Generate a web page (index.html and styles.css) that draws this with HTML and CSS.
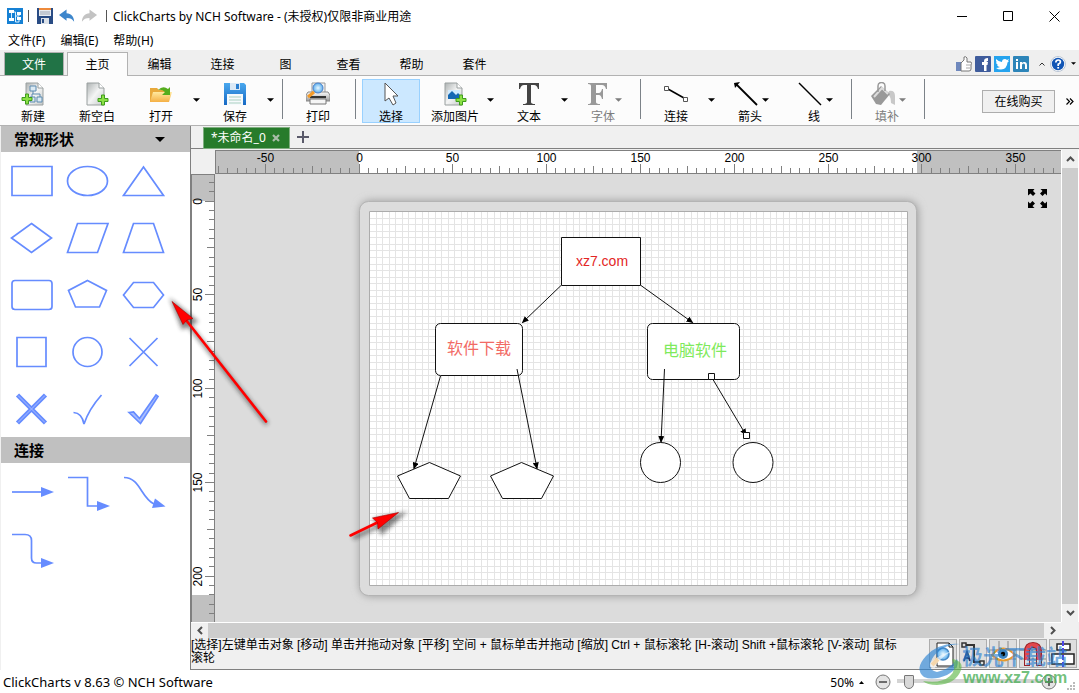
FILE: index.html
```html
<!DOCTYPE html>
<html lang="zh-CN">
<head>
<meta charset="utf-8">
<title>ClickCharts by NCH Software</title>
<link rel="stylesheet" href="styles.css">
</head>
<body>
<svg class="defs" aria-hidden="true">
  <defs>
    <linearGradient id="page" x1="0" y1="0" x2="1" y2="1"><stop offset="0" stop-color="#aeb3b3"/><stop offset=".5" stop-color="#f4f5f5"/><stop offset="1" stop-color="#c4c8c8"/></linearGradient>
    <linearGradient id="blue" x1="0" y1="0" x2="0" y2="1"><stop offset="0" stop-color="#4aa8ee"/><stop offset="1" stop-color="#1769c4"/></linearGradient>
    <linearGradient id="folder" x1="0" y1="0" x2="0" y2="1"><stop offset="0" stop-color="#ffe9a0"/><stop offset="1" stop-color="#f5b044"/></linearGradient>
    <linearGradient id="metal" x1="0" y1="0" x2="0" y2="1"><stop offset="0" stop-color="#fdfdfd"/><stop offset="1" stop-color="#9c9c9c"/></linearGradient>
    <radialGradient id="lens"><stop offset="0" stop-color="#e8f8ff"/><stop offset="1" stop-color="#5aaeee"/></radialGradient>
    <symbol id="plus" viewBox="0 0 12 12"><path d="M4.500 1h3v3.500H11v3H7.500V11h-3V7.500H1v-3h3.500z" fill="#8be045" stroke="#3e9c1c"/></symbol>
    <symbol id="floppy" viewBox="0 0 24 24"><path d="M1 1h20l2 2v20H1z" fill="url(#blue)"/><path d="M7 1h10v7H7z" fill="#dbe9f6"/><path d="M13 2h3v5h-3z" fill="#2b7fd0"/><path d="M4 12h16v11H4z" fill="#f6fafc"/><path d="M6 15h12M6 18h12M6 21h12" stroke="#a9cfc0" stroke-width="1"/></symbol>
    <symbol id="caret" viewBox="0 0 8 4"><path d="M0 0h8L4 4z" fill="currentColor"/></symbol>
    <marker id="tip" markerWidth="7" markerHeight="6" refX="6" refY="3" orient="auto"><path d="M0 0l7 3-7 3z"/></marker>
    <filter id="soft" x="-30%" y="-30%" width="160%" height="160%"><feGaussianBlur stdDeviation="2"/></filter>
    <filter id="page-shadow" x="-10%" y="-10%" width="120%" height="120%"><feGaussianBlur stdDeviation="4"/></filter>
  </defs>
</svg>

<header class="titlebar">
  <svg width="16" height="16" viewBox="0 0 16 16" class="app-icon"><path d="M0 0h16v16H0z" fill="#1681d4"/><path d="M2 2h5v3H2zM2 10h5v3H2zM10 4h4v3h-4zM10 9h4v3h-4z" fill="#fff"/><path d="M4.500 5v5M7 4h1.500v10H12v-2M8 8h4V7" fill="none" stroke="#d9efff"/></svg>
  <span class="divider"></span>
  <button class="quick" aria-label="保存"><svg width="18" height="18" viewBox="0 0 18 18"><path d="M1 1h16v16H1z" fill="#294c84"/><path d="M3 1h12v8H3z" fill="#e9edf2"/><path d="M3 1h12v2H3z" fill="#ee8a3b"/><path d="M4 5h10M4 7h10" stroke="#9ca6b3"/><path d="M5 11h8v6H5z" fill="#dce2e9"/><path d="M6 12h2v4H6z" fill="#294c84"/></svg></button>
  <button class="quick" aria-label="撤销"><svg width="17" height="16" viewBox="0 0 18 16"><path d="M0 7l8-6v4c5 0 8 4 8 9-2-3-4-4-8-4v3z" fill="#3d86cc"/></svg></button>
  <button class="quick" aria-label="重做"><svg width="17" height="16" viewBox="0 0 18 16"><path d="M17 7L9 1v4c-5 0-8 4-8 9 2-3 4-4 8-4v3z" fill="#c3c3c3"/></svg></button>
  <span class="divider last"></span>
  <h1 class="title">ClickCharts by NCH Software - (未授权)仅限非商业用途</h1>
  <div class="window-buttons">
    <button aria-label="最小化"><svg width="11" height="11"><path d="M0 5.500h10" stroke="#000"/></svg></button>
    <button aria-label="最大化"><svg width="11" height="11"><path d="M.5.500h9v9h-9z" fill="none" stroke="#000"/></svg></button>
    <button aria-label="关闭"><svg width="11" height="11"><path d="M.5.500l10 10m0-10l-10 10" stroke="#000"/></svg></button>
  </div>
</header>

<nav class="menubar">
  <button>文件(F)</button><button>编辑(E)</button><button>帮助(H)</button>
</nav>

<nav class="ribbon">
  <button class="ribbon-tab file">文件</button>
  <button class="ribbon-tab active">主页</button>
  <button class="ribbon-tab">编辑</button>
  <button class="ribbon-tab">连接</button>
  <button class="ribbon-tab">图</button>
  <button class="ribbon-tab">查看</button>
  <button class="ribbon-tab">帮助</button>
  <button class="ribbon-tab">套件</button>
  <div class="social">
    <button aria-label="赞"><svg width="16" height="16" viewBox="0 0 16 16"><path d="M0 6h5v9H0z" fill="#6f88bd"/><path d="M5 7l3-3V1q2-1 3 1v4h4q1 1 0 3v4q0 2-2 2H5z" fill="#fff" stroke="#777"/><path d="M10 9h5M10 12h4" stroke="#aaa"/></svg></button>
    <button aria-label="Facebook"><svg width="16" height="16" viewBox="0 0 16 16"><rect width="16" height="16" rx="1" fill="#3f5c9c"/><path d="M9 15V9H7V6h2V5q0-3 4-3v3q-1.500 0-1.500 1H13l-.5 3h-1v6z" fill="#fff"/></svg></button>
    <button aria-label="Twitter"><svg width="16" height="16" viewBox="0 0 16 16"><rect width="16" height="16" fill="#25a3ee"/><path d="M2 3q3 3 6 3 0-3 3-3 1 0 2 1l2-1-1 2h1l-1.500 1.500Q13 13 7 13.500q-3 0-5-1.500 2 0 4-1-2 0-3-2h1Q2 8 2 6l1 .5Q1.500 5 2 3z" fill="#fff"/></svg></button>
    <button aria-label="LinkedIn"><svg width="16" height="16" viewBox="0 0 16 16"><rect width="16" height="16" rx="1" fill="#2d85b9"/><path d="M3 6h2v7H3zM3 3h2v2H3zM7 6h2v1q1-1.500 3-1 2 .5 2 3v4h-2V9q0-1.500-1.500-1.500T9 9v4H7z" fill="#fff"/></svg></button>
    <button class="collapse" aria-label="折叠"><svg width="6" height="4"><path d="M.5 3.500L3 1l2.500 2.500" fill="none" stroke="#333"/></svg></button>
    <button aria-label="关于"><svg width="16" height="16" viewBox="0 0 16 16"><circle cx="8" cy="8" r="7.500" fill="#fff" stroke="#b8c4d4"/><circle cx="8" cy="8" r="6.200" fill="#1155b5"/><path d="M5.800 6.500Q6 4 8.200 4t2.200 2Q10.400 7.300 8.200 8.300V10" fill="none" stroke="#fff" stroke-width="1.700"/><path d="M7.300 11h1.800v1.600H7.300z" fill="#fff"/></svg></button>
    <button class="more" aria-label="更多"><svg width="5" height="3"><use href="#caret" width="5" height="3"/></svg></button>
  </div>
</nav>

<section class="toolbar">
  <button class="tool"><svg width="24" height="24" viewBox="0 0 24 24"><path d="M5 1h12l5 5v17H5z" fill="url(#page)" stroke="#9aa0a0"/><path d="M17 1v5h5" fill="#fff" stroke="#9aa0a0"/><path d="M9 4h6v5H9zM9 15h5v5H9zM16 15h5v5h-5z" fill="#dceaf3" stroke="#5c8bb0"/><path d="M12 9v3M11 15v-3h8v3" fill="none" stroke="#5c8bb0"/><use href="#plus" y="11" width="12" height="12"/></svg><span>新建</span></button>
  <button class="tool"><svg width="24" height="24" viewBox="0 0 24 24"><path d="M2 1h12l5 5v17H2z" fill="url(#page)" stroke="#9aa0a0"/><path d="M14 1v5h5" fill="#fff" stroke="#9aa0a0"/><use href="#plus" x="12" y="12" width="12" height="12"/></svg><span>新空白</span></button>
  <div class="split"><button class="tool"><svg width="24" height="24" viewBox="0 0 24 24"><path d="M1 6h7l2 2h9v12H1z" fill="#e8a93c"/><path d="M1 20L4 10h19l-3 10z" fill="url(#folder)"/><path d="M9 8q5-5 10-1l2-2v8h-8l3-3q-3-3-7-2z" fill="#55ad1d"/></svg><span>打开</span></button><button class="drop" aria-label="打开选项"><svg width="7" height="4"><use href="#caret" width="7" height="4"/></svg></button></div>
  <div class="split"><button class="tool"><svg width="24" height="24"><use href="#floppy"/></svg><span>保存</span></button><button class="drop" aria-label="保存选项"><svg width="7" height="4"><use href="#caret" width="7" height="4"/></svg></button></div>
  <span class="sep"></span>
  <button class="tool"><svg width="24" height="24" viewBox="0 0 24 24"><path d="M6 1h13v11H6z" fill="#f3f3f3" stroke="#999"/><path d="M2 10h20l2 3v6H0v-6z" fill="url(#metal)" stroke="#888"/><path d="M4 14h16v2H4z" fill="#333"/><path d="M4 17h16v5H4z" fill="#f5f5f5" stroke="#777"/><circle cx="12" cy="6" r="5" fill="url(#lens)" stroke="#4c80c8"/><path d="M8 10l-6 5" stroke="#f39a28" stroke-width="3"/></svg><span>打印</span></button>
  <span class="sep"></span>
  <button class="tool selected"><svg width="24" height="24" viewBox="0 0 24 24"><path d="M6 1v18l4-3 4 7 3-2-3-7h5z" fill="#fff" stroke="#555"/></svg><span>选择</span></button>
  <div class="split"><button class="tool"><svg width="24" height="24" viewBox="0 0 24 24"><path d="M2 1h12l5 5v17H2z" fill="url(#page)" stroke="#9aa0a0"/><path d="M14 1v5h5" fill="#fff" stroke="#9aa0a0"/><path d="M5 8h12v9H5z" fill="#cfeaff"/><path d="M5 13l4-4 4 4 2-2 2 2v4H5z" fill="#1468b4"/><use href="#plus" x="12" y="12" width="12" height="12"/></svg><span>添加图片</span></button><button class="drop" aria-label="图片选项"><svg width="7" height="4"><use href="#caret" width="7" height="4"/></svg></button></div>
  <div class="split"><button class="tool"><svg width="24" height="24" viewBox="0 0 24 24"><path d="M2 1h20v6h-1q-1-4-4-4h-3v17q0 2 4 2v1H6v-1q4 0 4-2V3H7Q4 3 3 7H2z" fill="#444"/></svg><span>文本</span></button><button class="drop" aria-label="文本选项"><svg width="7" height="4"><use href="#caret" width="7" height="4"/></svg></button></div>
  <div class="split tight"><button class="tool" disabled><svg width="32" height="24" viewBox="0 0 32 24"><path d="M1 1h19v6h-1q-1-4-4-4H9v8h3q2 0 3-4h1v10h-1q-1-4-3-4H9v7q0 2 4 2v1H1v-1q3 0 3-2V4q0-2-3-2z" fill="#999"/></svg><span>字体</span></button><button class="drop" disabled aria-label="字体选项"><svg width="7" height="4"><use href="#caret" width="7" height="4"/></svg></button></div>
  <span class="sep"></span>
  <div class="split"><button class="tool"><svg width="24" height="24" viewBox="0 0 24 24"><path d="M4 7l16 9" stroke="#000" stroke-width="1.500"/><path d="M.5 4.500h4v4h-4zM19.500 15.500h4v4h-4z" fill="#fff" stroke="#555"/></svg><span>连接</span></button><button class="drop" aria-label="连接选项"><svg width="7" height="4"><use href="#caret" width="7" height="4"/></svg></button></div>
  <div class="split tight"><button class="tool"><svg width="32" height="24" viewBox="0 0 32 24"><path d="M2 2l21 21" stroke="#000" stroke-width="1.800"/><path d="M0 1l6-1-5 6z"/></svg><span>箭头</span></button><button class="drop" aria-label="箭头选项"><svg width="7" height="4"><use href="#caret" width="7" height="4"/></svg></button></div>
  <div class="split tight"><button class="tool"><svg width="32" height="24" viewBox="0 0 32 24"><path d="M1 1l22 22" stroke="#000" stroke-width="1.500"/></svg><span>线</span></button><button class="drop" aria-label="线选项"><svg width="7" height="4"><use href="#caret" width="7" height="4"/></svg></button></div>
  <span class="sep"></span>
  <div class="split tight"><button class="tool" disabled><svg width="32" height="24" viewBox="0 0 32 24"><path d="M18 9q6-1 6 5v9l-4-2q0-6-3-9z" fill="#c8c8c8"/><path d="M0 14L10 4l9 8-9 11-5-1z" fill="#999"/><path d="M3 15l8-9 6 6" fill="none" stroke="#ddd" stroke-width="2"/><path d="M7 10V4q0-3.500 3.500-3.500T14 4v5" fill="none" stroke="#999" stroke-width="1.500"/></svg><span>填补</span></button><button class="drop" disabled aria-label="填补选项"><svg width="7" height="4"><use href="#caret" width="7" height="4"/></svg></button></div>
  <span class="sep"></span>
  <button class="buy">在线购买</button>
  <button class="overflow" aria-label="更多工具"><svg width="8" height="7"><path d="M.5.500l3 3-3 3m3.500-6l3 3-3 3" fill="none" stroke="#000" stroke-width="1.200"/></svg></button>
</section>

<main class="workspace">
  <aside class="sidebar">
    <h2 class="side-title">常规形状<svg width="10" height="5"><use href="#caret" width="10" height="5"/></svg></h2>
    <div class="palette">
      <button aria-label="矩形"><svg viewBox="0 0 56 57"><path d="M9 14.500h40v29H9z"/></svg></button>
      <button aria-label="椭圆"><svg viewBox="0 0 56 57"><ellipse cx="28.500" cy="29" rx="20" ry="14.500"/></svg></button>
      <button aria-label="三角形"><svg viewBox="0 0 56 57"><path d="M28.500 15l20 28.500h-40z"/></svg></button>
      <button aria-label="菱形"><svg viewBox="0 0 56 57"><path d="M28.500 14.500l20 14.500-20 14.500L8.500 29z"/></svg></button>
      <button aria-label="平行四边形"><svg viewBox="0 0 56 57"><path d="M18.500 14.500H49l-10.500 29h-30z"/></svg></button>
      <button aria-label="梯形"><svg viewBox="0 0 56 57"><path d="M18.500 14.500h20l10 29h-40z"/></svg></button>
      <button aria-label="圆角矩形"><svg viewBox="0 0 56 57"><rect x="9" y="14.500" width="40" height="29" rx="3"/></svg></button>
      <button aria-label="五边形"><svg viewBox="0 0 56 57"><path d="M28.500 14.500l19 10-7 16.500h-24L9.500 24.500z"/></svg></button>
      <button aria-label="六边形"><svg viewBox="0 0 56 57"><path d="M8.500 29l10-12.500h20l10 12.500-10 12.500h-20z"/></svg></button>
      <button aria-label="正方形"><svg viewBox="0 0 56 57"><path d="M14 14.500h29v29H14z"/></svg></button>
      <button aria-label="圆形"><svg viewBox="0 0 56 57"><circle cx="28.500" cy="29" r="14.500"/></svg></button>
      <button aria-label="叉"><svg viewBox="0 0 56 57"><path d="M14.500 15l28 28m0-28l-28 28"/></svg></button>
      <button aria-label="粗叉"><svg viewBox="0 0 56 57"><path class="thick" d="M14.500 15l28 28m0-28l-28 28"/><path class="core" d="M15 15.500l27 27m0-27l-27 27"/></svg></button>
      <button aria-label="勾"><svg viewBox="0 0 56 57"><path d="M14.500 32.500Q23 33 25 44 30 29 42.500 15"/></svg></button>
      <button aria-label="粗勾"><svg viewBox="0 0 56 57"><path class="tinted" d="M14 32.500l4.500-.5 6 6.500 16.500-23.500 2 1.500-17.500 27z"/></svg></button>
    </div>
    <h2 class="side-title">连接</h2>
    <div class="palette">
      <button aria-label="直线箭头"><svg viewBox="0 0 56 57"><path d="M9 29h30"/><path class="head" d="M38 24L51 29l-13 5z"/></svg></button>
      <button aria-label="折线箭头"><svg viewBox="0 0 56 57"><path d="M9 14.500h19.500V43H39"/><path class="head" d="M38 38L51 43l-13 5z"/></svg></button>
      <button aria-label="曲线箭头"><svg viewBox="0 0 56 57"><path d="M9 14.500C25 14.500 26 35 39 41"/><path class="head" d="M40 35.500l10.500 8L37 45z"/></svg></button>
      <button aria-label="圆角箭头"><svg viewBox="0 0 56 57"><path d="M9 14.500h13q6.500 0 6.500 6V38q0 5 5 5H39"/><path class="head" d="M38 38L51 43l-13 5z"/></svg></button>
    </div>
  </aside>

  <section class="editor">
    <div class="doc-tabs">
      <div class="doc-tab"><button class="doc-name">*未命名_0</button><button class="doc-close" aria-label="关闭文档"><svg width="8" height="8"><path d="M1 1l6 6m0-6L1 7" stroke="#a9bda9" stroke-width="2.200"/></svg></button></div>
      <button class="doc-add" aria-label="新文档"><svg width="12" height="12"><path d="M6 0v12M0 6h12" stroke="#5a5a6a" stroke-width="2"/></svg></button>
    </div>
    <div class="corner"></div>
    <svg class="ruler-h" id="ruler-h"></svg>
    <svg class="ruler-v" id="ruler-v"></svg>
    <div class="canvas">
      <svg class="drawing">
        <g transform="translate(-215 -174)">
          <rect x="360" y="201" width="558" height="395" rx="10" fill="#999" filter="url(#page-shadow)"/>
          <rect x="359.500" y="201.500" width="557" height="394" rx="9" fill="#dcdcdc" stroke="#b4b4b4"/>
          <path d="M369.500 211.500h538v374h-538z" fill="#fff"/>
          <path id="grid" stroke="#e4e4e4"/>
          <path d="M369.500 211.500h538v374h-538z" fill="none" stroke="#acacac"/>
          <g class="node">
            <path d="M561.500 237.500h79v48h-79z"/>
            <rect x="435.500" y="323.500" width="87" height="52" rx="5"/>
            <rect x="647.500" y="323.500" width="92" height="56" rx="5"/>
            <path d="M429.500 462.500l31 13.500-12 22.500h-39L397.500 476z"/>
            <path d="M521.500 462.500l32 13.500-12 22.500h-39L490.500 476z"/>
            <circle cx="660.500" cy="462.500" r="20"/>
            <circle cx="753" cy="462.500" r="20"/>
          </g>
          <g class="wire">
            <path d="M561 285.500l-38.500 37"/><path d="M641 285.500l51.500 37"/>
            <path d="M440.500 376L414 468.500"/><path d="M517 369l20 99.500"/>
            <path d="M664.500 369L661 442"/><path d="M711.500 377l34.500 58"/>
          </g>
          <g class="node"><path d="M708.500 373.500h6v6h-6zM743.500 432.500h6v6h-6z"/></g>
          <text class="label latin" x="602" y="266" fill="#e32626">xz7.com</text>
          <text class="label" x="479" y="354" fill="#f26a64">软件下载</text>
          <text class="label" x="695" y="356" fill="#7fea5c">电脑软件</text>
        </g>
      </svg>
      <button class="fullscreen" aria-label="全屏"><svg width="19" height="19"><path d="M0 0h6.500L5 2l2.500 2.500-2.500 2.500L2.500 4.500 0 6.500zM19 0v6.500l-2-2L14.500 7 12 4.500 14.500 2l-2-2zM0 19v-6.500l2 2L4.500 12 7 14.500 4.500 17l2 2zM19 19h-6.500l2-2L12 14.500l2.500-2.500 2.500 2.500 2-2z"/></svg></button>
    </div>
    <div class="scroll-v"><button aria-label="向上"><svg width="9" height="6"><path d="M1 5l3.500-3.500L8 5"/></svg></button><span class="thumb"></span><button aria-label="向下"><svg width="9" height="6"><path d="M1 1l3.500 3.500L8 1"/></svg></button></div>
    <div class="scroll-h"><button aria-label="向左"><svg width="6" height="9"><path d="M5 1L1.500 4.500 5 8"/></svg></button><span class="thumb"></span><button aria-label="向右"><svg width="6" height="9"><path d="M1 1l3.500 3.500L1 8"/></svg></button></div>
    <div class="hints">
      <p>[选择]左键单击对象 [移动] 单击并拖动对象 [平移] 空间 + 鼠标单击并拖动 [缩放] Ctrl + 鼠标滚轮 [H-滚动] Shift +鼠标滚轮 [V-滚动] 鼠标滚轮</p>
      <div class="toggles">
        <button aria-label="预览"><svg viewBox="0 0 26 26"><path d="M7 2h12l4 4v19H7z" fill="#fff" stroke="#222"/><path d="M19 2v4h4" fill="none" stroke="#222"/><circle cx="13" cy="13" r="6" fill="url(#lens)" stroke="#4688c4" stroke-width="1.500"/><path d="M8 18l-6 6" stroke="#e59a2e" stroke-width="4"/></svg></button>
        <button aria-label="连接文本"><svg viewBox="0 0 26 26"><path d="M4 4h10v17h8" fill="none" stroke="#333" stroke-width="2"/><path d="M2 2h4v4H2zM20 20h4v4h-4z" fill="#ddd" stroke="#333" stroke-width="1.500"/><path d="M4 20l3-9 3 9m-5-3h4" fill="none" stroke="#23366b" stroke-width="2"/></svg></button>
        <button aria-label="显示"><svg viewBox="0 0 26 26"><path d="M9 0v26M18 0v26M0 9h26M0 18h26" stroke="#888"/><path d="M2 14Q13 1 25 14 13 25 2 14z" fill="#fff" stroke="#e59a2e" stroke-width="2"/><circle cx="13" cy="13" r="5" fill="#3f86c0"/><circle cx="13" cy="13" r="2.200"/></svg></button>
        <button aria-label="吸附"><svg viewBox="0 0 26 26"><path d="M0 9h26M0 18h26" stroke="#888"/><path d="M7 25V11q0-7 6-7t6 7v14" fill="none" stroke="#9a1f24" stroke-width="6"/><path d="M7 19v-8q0-7 6-7t6 7v8" fill="none" stroke="#e2474c" stroke-width="4"/><path d="M7 19v5M19 19v5" stroke="#ddd" stroke-width="4"/></svg></button>
        <button aria-label="对齐"><svg viewBox="0 0 26 26"><path d="M7 3h13v6H7zM2 13h22v10H2z" fill="#fff" stroke="#222" stroke-width="1.500"/><path d="M13 0v26" stroke="#4b45e8" stroke-width="2" stroke-dasharray="5 2"/></svg></button>
      </div>
    </div>
  </section>

  <svg class="annotations" aria-hidden="true">
    <g transform="translate(0 -126)">
      <g class="mark-shadow"><path d="M188 324l79 100M353 538l26-12"/><path class="fill" d="M174 304l21 17-12 6zM401 515l-25 5 6 12z"/></g>
      <path class="mark" d="M186 320l80 101.500M350.500 535.500l29-14"/>
      <path class="mark-head" d="M172 301.500l21 17-6 1.500-4 4.500zM398.500 512.500l-26 5.500 5 4.500.5 6.500z"/>
    </g>
  </svg>
</main>

<footer class="statusbar">
  <span class="version">ClickCharts v 8.63 © NCH Software</span>
  <button class="zoom-value">50% <svg width="5" height="3"><path d="M0 3h5L2.500 0z"/></svg></button>
  <button class="round" aria-label="缩小"><svg width="16" height="16"><circle cx="8" cy="8" r="7" fill="#e4e4e4" stroke="#777"/><path d="M4 8h8" stroke="#444" stroke-width="1.500"/></svg></button>
  <input class="zoom-slider" type="range" min="0" max="100" value="5" aria-label="缩放">
  <button class="round" aria-label="放大"><svg width="16" height="16"><circle cx="8" cy="8" r="7" fill="#e4e4e4" stroke="#777"/><path d="M4 8h8M8 4v8" stroke="#444" stroke-width="1.500"/></svg></button>
  <svg class="grip" width="9" height="9"><path d="M6 0h2v2H6zM3 3h2v2H3zM6 3h2v2H6zM0 6h2v2H0zM3 6h2v2H3zM6 6h2v2H6z" fill="#bbb"/></svg>
</footer>

<svg class="watermark" width="165" height="60" viewBox="0 0 165 60" aria-hidden="true">
  <path d="M46 11Q26 12 18 26q-5 11 5 13 12-2 20-13 4 8-10 16-14 6-23 2-10-8 2-21Q25 9 46 11z" fill="#2b82d2" opacity=".65"/>
  <path d="M9 48q18 3 27-5 7-6 2-17 12 2 9 11-5 14-24 15Q13 52 9 48z" fill="#61b94c" opacity=".65"/>
  <path d="M16 30Q24 22 38 18q-14 8-17 17-6 1-5-5z" fill="#fff" opacity=".6"/>
  <text x="48" y="31" class="mark-cn">极光下载站</text>
  <text x="49" y="50" class="mark-url">www.xz7.com</text>
</svg>
<script src="script.js"></script>
</body>
</html>
```
FILE: styles.css
```css
* { box-sizing: border-box; }

html, body { height: 100%; margin: 0; }

body {
  display: flex;
  flex-direction: column;
  position: relative;
  overflow: hidden;
  background: #fff;
  color: #000;
  font: 12px/16px "Noto Sans", "Noto Sans CJK SC", sans-serif;
}

button {
  margin: 0;
  padding: 0;
  border: 0;
  background: none;
  color: inherit;
  font: inherit;
}

svg { display: block; }
.defs { position: absolute; width: 0; height: 0; }

/* Title bar and menus */
.titlebar {
  display: flex;
  align-items: center;
  flex: none;
  height: 32px;
  padding-left: 7px;
}
.divider { width: 1px; height: 12px; margin: 0 7px 0 5px; background: #555; }
.divider.last { margin: 0 6px 0 8px; }
.quick { margin-right: 5px; }
.quick:last-of-type { margin-right: 0; }
.title { margin: 0; padding-top: 2px; font: inherit; white-space: nowrap; }
.window-buttons { display: flex; margin: 0 2px 0 auto; }
.window-buttons button {
  display: flex;
  align-items: center;
  justify-content: center;
  width: 46px;
  height: 31px;
}
.menubar {
  display: flex;
  flex: none;
  gap: 15px;
  height: 18px;
  padding-left: 8px;
}

/* Ribbon */
.ribbon {
  display: flex;
  flex: none;
  height: 26px;
  padding: 2px 3px 0 4px;
  border-bottom: 1px solid #b2b2b2;
  background: #efefef;
}
.ribbon-tab { width: 63px; height: 23px; padding-top: 2px; }
.ribbon-tab.file {
  width: 60px;
  margin-right: 3px;
  padding-top: 1px;
  border: 1px solid #b2b2b2;
  border-bottom: 0;
  background: #217346;
  color: #fff;
}
.ribbon-tab.active {
  width: 61px;
  height: 24px;
  padding-top: 1px;
  border: 1px solid #b2b2b2;
  border-bottom: 0;
  background: #fcfcfc;
}
.social { display: flex; align-items: center; gap: 3px; margin-left: auto; }
.social .collapse { margin: 0 2px 0 7px; }
.social .more { margin-left: 2px; }

/* Toolbar */
.toolbar {
  display: flex;
  flex: none;
  gap: 6px;
  height: 50px;
  padding: 3px 5px 2px 4px;
  border-bottom: 1px solid #b2b2b2;
  background: #fcfcfc;
}
.tool {
  display: flex;
  flex-direction: column;
  align-items: center;
  flex: none;
  width: 58px;
  height: 44px;
  padding-top: 3px;
  white-space: nowrap;
}
.tool svg { flex: none; }
.tool span { padding-top: 2px; line-height: 18px; }
.tool.selected { padding-top: 2px; border: 1px solid #99d1ff; background: #cce8ff; }
.tool:disabled, .drop:disabled { color: #7d7d7d; }
.split { display: flex; flex: none; }
.drop {
  display: flex;
  align-items: center;
  justify-content: center;
  width: 12px;
  height: 42px;
  margin-right: -2px;
}
.tight .drop { margin: 0 8px 0 -20px; }
.sep { flex: none; width: 1px; height: 40px; margin-left: 2px; background: #7c8288; }
.buy {
  width: 73px;
  height: 23px;
  margin: 11px 5px 0 auto;
  border: 1px solid #adadad;
  background: #f0f0f0;
}
.overflow { height: 44px; }

/* Workspace */
.workspace { display: flex; flex: 1; min-height: 0; position: relative; }
.sidebar {
  flex: none;
  width: 191px;
  border-left: 1px solid #f0f0f0;
  border-right: 1px solid #808080;
}
.side-title {
  display: flex;
  align-items: center;
  height: 26px;
  margin: 0;
  padding: 0 25px 0 13px;
  background: #c0c0c0;
  font-size: 15px;
  line-height: 26px;
}
.side-title svg { margin-left: auto; }
.palette {
  display: grid;
  grid-template-columns: repeat(3, 56px);
  grid-auto-rows: 57px;
  padding-left: 2px;
}
.palette svg {
  width: 56px;
  height: 57px;
  fill: none;
  stroke: #668cff;
  stroke-width: 1.7;
}
.palette .thick { stroke-width: 4.5; }
.palette .core { stroke: #a9beff; stroke-width: 1; }
.palette .head { fill: #668cff; stroke: none; }
.palette .tinted { fill: #a9beff; }

.editor {
  display: grid;
  flex: 1;
  min-width: 0;
  grid-template-columns: 24px 1fr 18px;
  grid-template-rows: 24px 24px 1fr 16px 32px;
  background: #f0f0f0;
}
.doc-tabs {
  display: flex;
  grid-column: 1 / -1;
  height: 23px;
  padding: 1px 0 0 12px;
  border-bottom: 1px solid #808080;
}
.doc-tab {
  display: flex;
  align-items: center;
  gap: 6px;
  width: 87px;
  height: 22px;
  padding: 0 7px;
  border: 1px solid #7fae7f;
  background: #277b2b;
  color: #fff;
  white-space: nowrap;
}
.doc-add { margin-left: 7px; padding-bottom: 2px; }
.ruler-h, .ruler-v { width: 100%; height: 100%; overflow: hidden; }
.ruler-h text, .ruler-v text { font: 12px "Liberation Sans", sans-serif; text-anchor: middle; }
.canvas { position: relative; min-height: 0; background: #dcdcdc; }
.drawing { position: absolute; inset: 0; width: 100%; height: 100%; }
.node { fill: #fff; stroke: #111; }
.wire { stroke: #111; }
.wire path { marker-end: url(#tip); }
.label { font: 16px "Noto Sans CJK SC", sans-serif; text-anchor: middle; }
.label.latin { font: 14px "Liberation Sans", sans-serif; }
.fullscreen { position: absolute; top: 15px; right: 14px; }

.scroll-v, .scroll-h { display: flex; }
.scroll-v {
  grid-column: 3;
  grid-row: 2 / 4;
  flex-direction: column;
  border: solid #fff;
  border-width: 0 1px;
}
.scroll-h { grid-column: 1 / 3; border-top: 1px solid #fff; }
.scroll-v button, .scroll-h button {
  display: flex;
  align-items: center;
  justify-content: center;
  flex: none;
}
.scroll-v button { height: 18px; }
.scroll-h button { width: 17px; }
.scroll-v path, .scroll-h path { fill: none; stroke: #505050; stroke-width: 2; }
.thumb { flex: 1; background: #cdcdcd; }

.hints { display: flex; grid-column: 1 / -1; border-bottom: 1px solid #808080; }
.hints p {
  flex: 1;
  margin: 0;
  padding: 1px 24px 0 0;
  font-family: "Liberation Sans", "Noto Sans CJK SC", sans-serif;
  line-height: 13px;
}
.toggles { display: flex; gap: 2px; padding: 1px 2px 1px 0; }
.toggles button { width: 28px; height: 29px; border: 1px solid #adadad; background: #dedede; }
.toggles svg { width: 26px; height: 26px; }

.annotations { position: absolute; inset: 0; width: 100%; height: 100%; pointer-events: none; }
.mark { fill: none; stroke: #f00; stroke-width: 2.6; stroke-linecap: round; }
.mark-head { fill: #f00; stroke: #a00; stroke-width: .6; }
.mark-shadow { fill: none; stroke: #222; stroke-width: 4; opacity: .55; filter: url(#soft); }
.mark-shadow .fill { fill: #222; }

/* Status bar */
.statusbar { display: flex; align-items: center; flex: none; height: 23px; padding: 0 3px; }
.version { font-size: 13px; }
.zoom-value { display: flex; align-items: center; gap: 5px; margin-left: auto; padding-top: 2px; }
.round { margin-left: 11px; }
.zoom-slider {
  appearance: none;
  width: 144px;
  height: 16px;
  margin: 0 0 0 6px;
  background: linear-gradient(#d4d4d4, #d4d4d4) 0 5px / 100% 4px no-repeat;
}
.zoom-slider::-webkit-slider-thumb {
  appearance: none;
  width: 10px;
  height: 14px;
  border: 1px solid #777;
  border-radius: 1px 1px 5px 5px;
  background: #d8d8d8;
}
.zoom-slider + .round { margin-left: 0; }
.grip { align-self: flex-end; margin: 0 0 2px 10px; }

.watermark { position: absolute; right: 0; bottom: 0; pointer-events: none; }
.mark-cn { fill: #2a7fd0; fill-opacity: .65; font: bold 21px "Noto Sans CJK SC", sans-serif; }
.mark-url { fill: #4cb05a; fill-opacity: .8; font: bold 16px "Liberation Sans", sans-serif; }
```
FILE: script.js
```js
// Rulers: one unit is 1.876px, with a tick every 5 units.
const SCALE = 1.876;
const tickLength = n => (n % 50 === 0 ? 9 : n % 25 === 0 ? 7 : 5);

function horizontalRuler() {
  const origin = 144;
  let ticks = "", labels = "";
  for (let n = -75; n <= 370; n += 5) {
    const x = Math.floor(origin + n * SCALE) + 0.5;
    ticks += `M${x} 23v-${tickLength(n)}`;
    if (n % 50 === 0) labels += `<text x="${x}" y="12">${n}</text>`;
  }
  document.getElementById("ruler-h").innerHTML =
    `<rect width="100%" height="24" fill="#c0c0c0"/><rect x="144" width="558" height="24" fill="#fff"/>` +
    `<path d="M0 .5H4000M0 23.5H4000M.5 0V24${ticks}" stroke="#808080"/>` + labels;
}

function verticalRuler() {
  const origin = 27;
  let ticks = "", labels = "";
  for (let n = -10; n <= 220; n += 5) {
    const y = Math.floor(origin + n * SCALE) + 0.5;
    ticks += `M23 ${y}h-${tickLength(n)}`;
    if (n % 50 === 0) labels += `<text transform="translate(11 ${y}) rotate(-90)">${n}</text>`;
  }
  document.getElementById("ruler-v").innerHTML =
    `<rect width="24" height="100%" fill="#c0c0c0"/><rect y="27" width="24" height="394" fill="#fff"/>` +
    `<path d="M23.5 0V4000M0 .5H24M.5 0V4000${ticks}" stroke="#808080"/>` + labels;
}

function pageGrid() {
  const step = 3.5 * SCALE;
  let d = "";
  for (let x = 369.5 + step; x < 907; x += step) d += `M${Math.floor(x) + 0.5} 212V585`;
  for (let y = 211.5 + step; y < 585; y += step) d += `M370 ${Math.floor(y) + 0.5}H907`;
  document.getElementById("grid").setAttribute("d", d);
}

horizontalRuler();
verticalRuler();
pageGrid();
```
